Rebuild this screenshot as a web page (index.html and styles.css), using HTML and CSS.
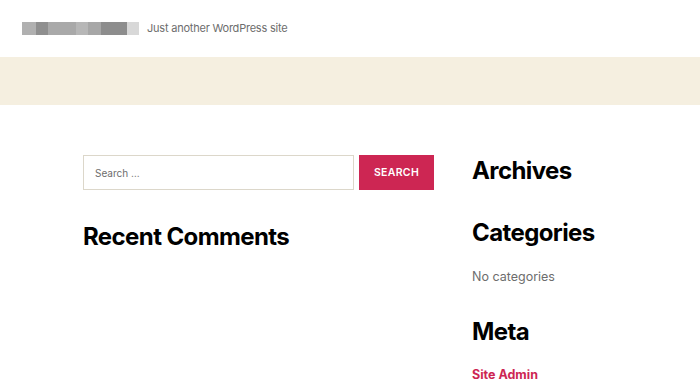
FILE: index.html
```html
<!DOCTYPE html>
<html>
<head>
<meta charset="utf-8">
<link rel="stylesheet" href="styles.css">
</head>
<body>
<header class="site-header">
  <div class="site-title" aria-label="Site title (blurred)">
    <span class="px px1"></span><span class="px px2"></span><span class="px px3"></span><span class="px px4"></span><span class="px px5"></span><span class="px px6"></span><span class="px px7"></span>
  </div>
  <div class="tagline">Just another WordPress site</div>
</header>
<div class="band"></div>
<main class="widgets">
  <div class="col-left">
    <form class="search">
      <input class="search-field" type="search" placeholder="Search …">
      <button class="search-submit" type="button">Search</button>
    </form>
    <h2 class="widget-title recent">Recent Comments</h2>
  </div>
  <div class="col-right">
    <h2 class="widget-title archives">Archives</h2>
    <h2 class="widget-title categories">Categories</h2>
    <p class="muted">No categories</p>
    <h2 class="widget-title meta">Meta</h2>
    <a class="meta-link" href="#">Site Admin</a>
  </div>
</main>
</body>
</html>
```

FILE: styles.css
```css
* { box-sizing: border-box; }
html, body { margin: 0; padding: 0; background: #fff; }
body { font-family: Inter, "Noto Sans", sans-serif; color: #000; width: 700px; height: 384px; overflow: hidden; }

.site-header { height: 57px; display: flex; align-items: center; padding: 1px 0 2px 22px; }
.site-title { display: flex; height: 13px; }
.px { display: block; height: 13px; }
.px1 { width: 14px; background: #b0b0b0; }
.px2 { width: 12px; background: #8f8f8f; }
.px3 { width: 28px; background: #a9a9a9; }
.px4 { width: 12px; background: #b7b7b7; }
.px5 { width: 13px; background: #a7a7a7; }
.px6 { width: 26px; background: #8d8d8d; }
.px7 { width: 12px; background: #d8d8d8; }
.tagline { margin-left: 8px; font-size: 11px; color: #6d6d6d; letter-spacing: -0.02em; }

.band { height: 48px; background: #f5efe0; }

.widgets { display: grid; grid-template-columns: 351px 1fr; column-gap: 38px; padding: 50px 0 0 83px; }

.search { display: flex; height: 35px; }
.search-field { flex: 0 0 271px; height: 35px; border: 1px solid #dcd7ca; font-family: Inter, sans-serif; font-size: 10px; padding: 0 11px; color: #000; outline: none; }
.search-field::placeholder { color: #6d6d6d; }
.search-submit { margin-left: 5px; width: 75px; height: 35px; border: 0; background: #cd2653; color: #fff; font-family: Inter, sans-serif; font-weight: 600; font-size: 10.5px; letter-spacing: 0.03em; text-transform: uppercase; padding: 0; }

.widget-title { font-size: 24px; font-weight: 700; letter-spacing: -0.025em; line-height: 1.2; margin: 0; }
.recent { margin-top: 33px; }
.col-right { display: flex; flex-direction: column; align-items: flex-start; padding-top: 2px; }
.archives { margin-bottom: 33px; }
.categories { margin-bottom: 21px; }
.muted { margin: 0 0 34px; font-size: 12.5px; color: #6d6d6d; }
.meta { margin-bottom: 21px; }
.meta-link { font-size: 12.5px; font-weight: 700; color: #cd2653; text-decoration: none; }
```
